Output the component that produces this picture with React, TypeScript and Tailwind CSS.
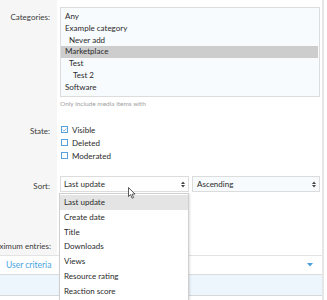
import { Check } from "lucide-react";

const categories = [
  { name: "Any", depth: 0 },
  { name: "Example category", depth: 0 },
  { name: "Never add", depth: 1 },
  { name: "Marketplace", depth: 0, selected: true },
  { name: "Test", depth: 1 },
  { name: "Test 2", depth: 2 },
  { name: "Software", depth: 0 },
];

const sortOptions = [
  "Last update",
  "Create date",
  "Title",
  "Downloads",
  "Views",
  "Resource rating",
  "Reaction score",
];

const states = [
  { label: "Visible", checked: true },
  { label: "Deleted", checked: false },
  { label: "Moderated", checked: false },
];

function SelectArrows() {
  return (
    <svg width="4" height="7" viewBox="0 0 4 7" className="shrink-0">
      <path d="M0 3 L2 0.5 L4 3 Z" fill="#444" />
      <path d="M0 4 L2 6.5 L4 4 Z" fill="#444" />
    </svg>
  );
}

function Cursor() {
  return (
    <svg width="8" height="12" viewBox="0 0 8 12" className="absolute left-[128px] top-[187px]">
      <path
        d="M0.5 0.5 L0.5 9.5 L2.6 7.6 L4.2 11.2 L5.6 10.6 L4.1 7.1 L7 7.1 Z"
        fill="#fff"
        stroke="#333"
        strokeWidth="0.8"
        strokeLinejoin="round"
      />
    </svg>
  );
}

export default function App() {
  return (
    <div className="relative w-[327px] h-[300px] overflow-hidden bg-white text-[8px] text-[#2a2a2a] font-['Lato',sans-serif]">
      <div className="w-[324px] h-full border-r-2 border-[#e6e6e6] flex flex-col">
        {/* Categories */}
        <div className="flex">
          <div className="w-[57px] shrink-0 bg-[#f6f6f6] text-right pr-[7px] pt-[11px] text-[#3a3a3a]">
            Categories:
          </div>
          <div className="flex-1 pl-[3px] pr-[2px] pt-[7px] pb-[6px]">
            <div className="h-[90px] border border-[#dcdcdc] bg-[#f8fbfe] py-[3px] pr-[1px]">
              {categories.map((c) => (
                <div
                  key={c.name}
                  className={`h-[11.8px] leading-[11.8px] pl-[4px] ${c.selected ? "bg-[#cdcdcd]" : ""}`}
                >
                  <span style={{ paddingLeft: c.depth * 4 }}>{c.name}</span>
                </div>
              ))}
            </div>
            <div className="mt-[2px] text-[6.5px] text-[#a0a0a0]">Only include media items with</div>
          </div>
        </div>

        {/* State */}
        <div className="flex">
          <div className="w-[57px] shrink-0 bg-[#f6f6f6] text-right pr-[7px] pt-[10px] text-[#3a3a3a]">
            State:
          </div>
          <div className="flex-1 pl-[4px] pt-[10px] pb-[6px] flex flex-col gap-[2.6px]">
            {states.map((s) => (
              <label key={s.label} className="flex items-center gap-[4px] h-[10.4px]">
                <span className="w-[7px] h-[7px] border border-[#58a1dc] bg-white flex items-center justify-center">
                  {s.checked && <Check size={6} strokeWidth={3} color="#3f86c8" />}
                </span>
                {s.label}
              </label>
            ))}
          </div>
        </div>

        {/* Sort */}
        <div className="flex">
          <div className="w-[57px] shrink-0 bg-[#f6f6f6] text-right pr-[7px] pt-[13px] text-[#3a3a3a]">
            Sort:
          </div>
          <div className="flex-1 pl-[3px] pr-[2px] pt-[9px] pb-[18px] flex gap-[3px]">
            <div className="w-[129px] h-[16px] border border-[#dcdcdc] bg-white flex items-center justify-between pl-[3px] pr-[3px]">
              <span>Last update</span>
              <SelectArrows />
            </div>
            <div className="flex-1 h-[16px] border border-[#dcdcdc] bg-[#f8fbfe] flex items-center justify-between pl-[4px] pr-[3px]">
              <span>Ascending</span>
              <SelectArrows />
            </div>
          </div>
        </div>

        {/* Maximum entries */}
        <div className="flex border-b border-[#e3e3e3]">
          <div className="w-[57px] shrink-0 bg-[#f6f6f6] h-[45px] flex justify-end pr-[6px] pt-[30px] text-[#3a3a3a]">
            <span className="whitespace-nowrap">Maximum entries:</span>
          </div>
          <div className="flex-1" />
        </div>

        {/* User criteria */}
        <div className="h-[19px] flex items-center justify-between pl-[6px] pr-[9px] bg-white border-b border-[#dcdcdc] text-[#47a3e0] text-[8.5px]">
          <span>User criteria</span>
          <svg width="6" height="4" viewBox="0 0 6 4">
            <path d="M0 0 H6 L3 3.5 Z" fill="#4aa0dc" />
          </svg>
        </div>
        <div className="h-[21px] shrink-0 bg-[#edf5fd] border-b border-[#d8d8d8]" />
        <div className="flex-1 bg-white" />
      </div>

      {/* Open sort dropdown */}
      <div className="absolute left-[59px] top-[193px] w-[130px] bg-white border border-[#cfcfcf] shadow-[1px_1px_2px_rgba(0,0,0,0.12)] py-[1px]">
        {sortOptions.map((o, i) => (
          <div
            key={o}
            className={`h-[14.8px] leading-[14.8px] pl-[4px] ${i === 0 ? "bg-[#e4e4e4]" : ""}`}
          >
            {o}
          </div>
        ))}
      </div>

      <Cursor />
    </div>
  );
}
